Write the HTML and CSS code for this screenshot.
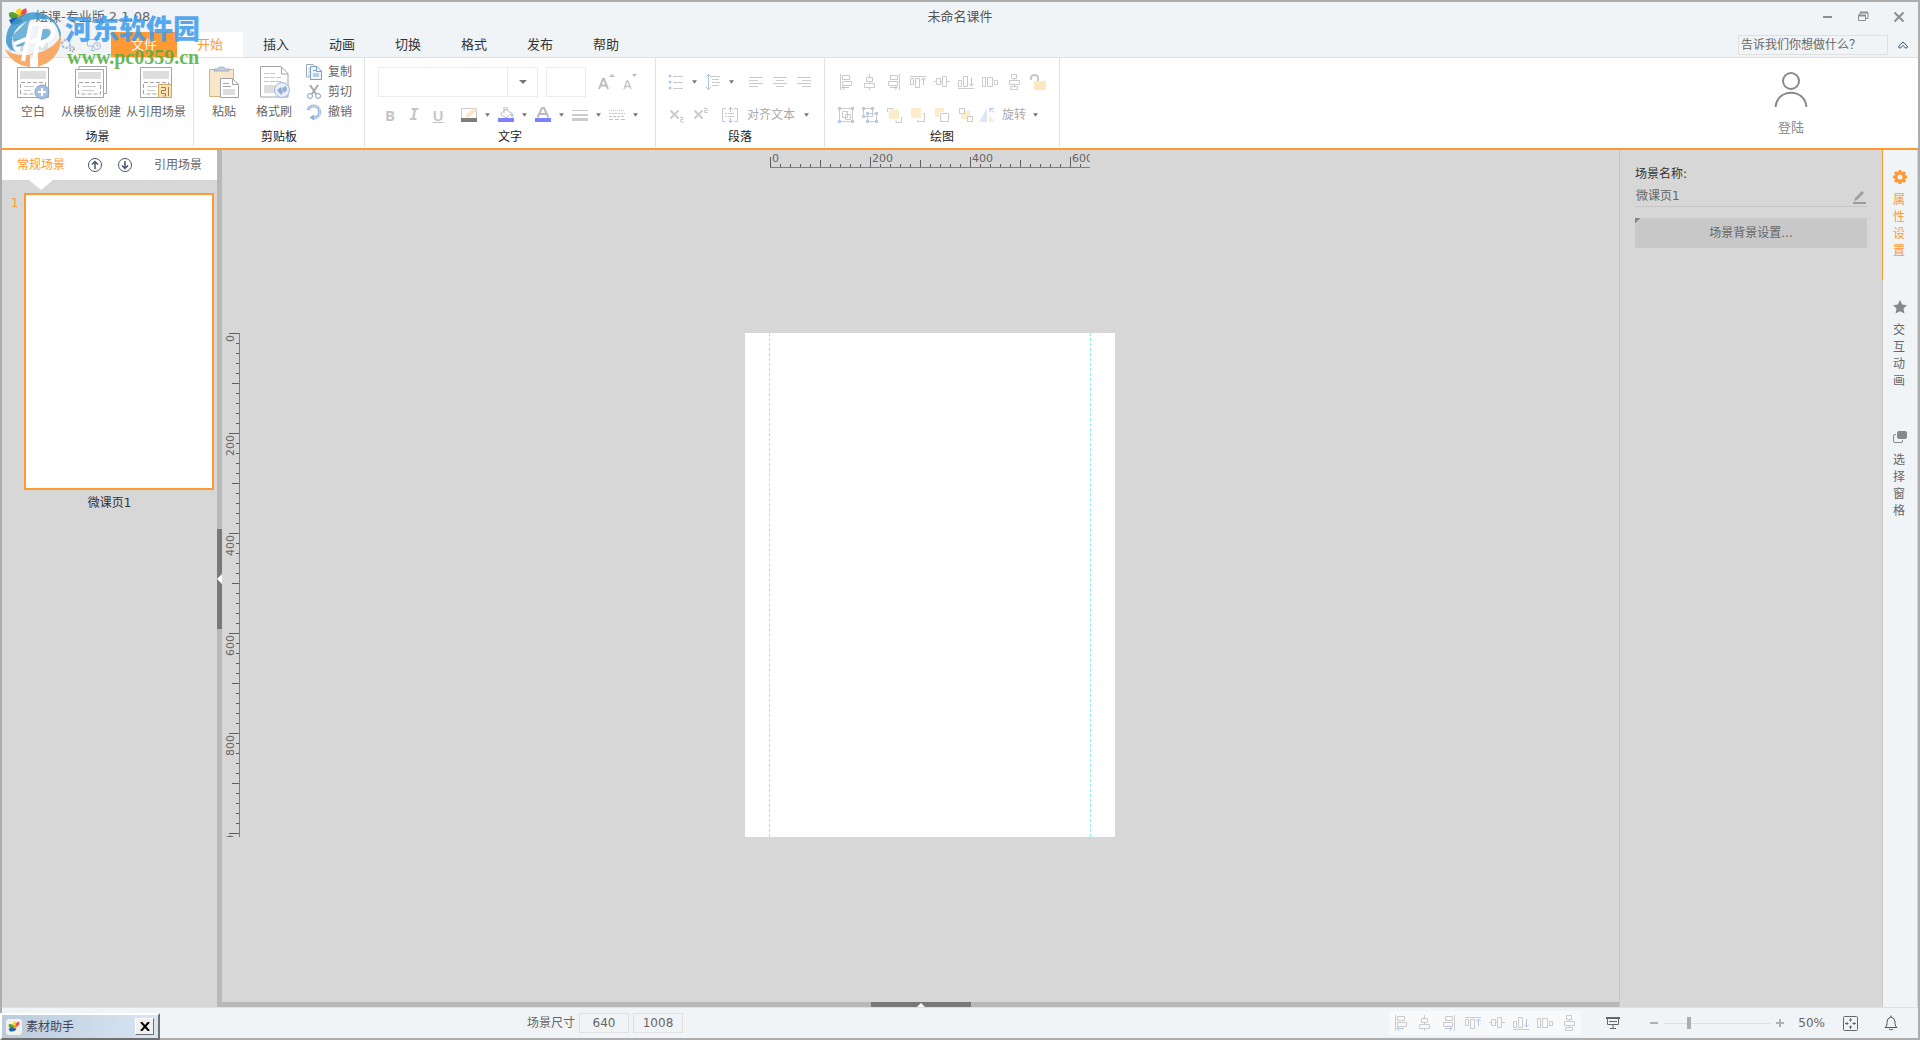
FILE: index.html
```html
<!DOCTYPE html>
<html lang="zh-CN">
<head>
<meta charset="utf-8">
<meta name="viewport" content="width=device-width, initial-scale=1">
<title>未命名课件 - 炫课-专业版 2.1.08</title>
<link rel="stylesheet" href="styles.css">
</head>
<body>
<svg class="sprite" aria-hidden="true">
  <defs>
    <symbol id="logo" viewBox="0 0 20 20">
      <path d="M8 3 L12 1 L14 4 L12 9 L9 8 Z" fill="#f8d21c"/>
      <path d="M14 3 L18 1 L19 5 L15 10 L12 9 Z" fill="#ee4b4b"/>
      <path d="M1 6 Q5 3 10 8 L11 11 L4 12 Q0 10 1 6 Z" fill="#5aa32c"/>
      <path d="M1 13 Q7 9 13 11 L14 14 Q10 19 3 17 Z" fill="#1d62b5"/>
      <path d="M10 8 L15 7 L13 13 L9 12 Z" fill="#f39a2b"/>
    </symbol>
    <symbol id="al-left" viewBox="0 0 16 16"><path class="g" d="M2.500 0v16M4.500 1.500h7v4h-7zM4.500 7.500h9v4h-9z"/><path class="b" d="M4 13.500h7M6.500 11l-2.500 2.500 2.500 2.500"/></symbol>
    <symbol id="al-center" viewBox="0 0 16 16"><path class="g" d="M7.500 0v3M7.500 7v3M7.500 14v2M4.500 3.500h6v4h-6zM2.500 9.500h10v4h-10z"/></symbol>
    <symbol id="al-right" viewBox="0 0 16 16"><path class="g" d="M13.500 0v16M4.500 1.500h7v4h-7zM2.500 7.500h9v4h-9z"/><path class="b" d="M4 13.500h7M8.500 11l2.500 2.500-2.500 2.500"/></symbol>
    <symbol id="al-top" viewBox="0 0 16 16"><path class="g" d="M0 2.500h16M.5 4.500h3v6h-3zM5.500 4.500h4v9h-4z"/><path class="b" d="M13.500 11V4M11 6.500L13.500 4 16 6.500"/></symbol>
    <symbol id="al-middle" viewBox="0 0 16 16"><path class="g" d="M0 7.500h2M6 7.500h2M13 7.500h3M2.500 4.500h4v6h-4zM8.500 2.500h4v10h-4z"/></symbol>
    <symbol id="al-bottom" viewBox="0 0 16 16"><path class="g" d="M0 14.500h16M.5 6.500h3v6h-3zM5.500 2.500h4v10h-4z"/><path class="b" d="M13.500 4v8M11 9.500l2.500 2.500 2.500-2.500"/></symbol>
    <symbol id="ds-h" viewBox="0 0 16 16"><path class="g" d="M.5 3.500h3v9h-3zM5.500 3.500h5v9h-5zM12.500 6.500h3v4h-3z"/></symbol>
    <symbol id="ds-v" viewBox="0 0 16 16"><path class="g" d="M8.500 4v3M8.500 10v2M5.500.5h5v4h-5zM3.500 6.500h10v4h-10zM4.500 12.500h7v3h-7z"/></symbol>
    <symbol id="caret" viewBox="0 0 6 4"><path d="M0 0h6L3 4z" fill="#777"/></symbol>
  </defs>
</svg>

<div class="window">
  <header class="titlebar">
    <div class="title-row">
      <div class="app-name"><svg width="20" height="20"><use href="#logo"/></svg><span>炫课-专业版 2.1.08</span></div>
      <h1 class="doc-name">未命名课件</h1>
      <div class="win-controls">
        <button type="button" aria-label="最小化"><svg width="12" height="12"><path d="M2 6h9" stroke="#8e8e8e" stroke-width="2"/></svg></button>
        <button type="button" aria-label="还原"><svg width="12" height="12"><path d="M3 4V1.500h8v6H8M1.500 4.500h7v5h-7z" fill="none" stroke="#8e8e8e" stroke-width="1"/><path d="M3 1.500h8M1 4.500h8" stroke="#8e8e8e" stroke-width="2"/></svg></button>
        <button type="button" aria-label="关闭"><svg width="12" height="12"><path d="M1.500 1.500l9 9M10.500 1.500l-9 9" stroke="#8e8e8e" stroke-width="2"/></svg></button>
      </div>
    </div>
    <div class="tab-row">
      <div class="quick">
        <button type="button" aria-label="保存"><svg width="16" height="16"><path d="M1.500 2.500h11l2 2v9h-13z" fill="#dbe3ee" stroke="#bccada"/><path d="M4 9h8v5H4z" fill="#fff"/></svg></button>
        <button type="button" aria-label="新建"><svg width="16" height="16"><path d="M3 1h7l4 4v8H3z" fill="#dbe3ee"/><path d="M8 5v6M5 8h6" stroke="#fff" stroke-width="2"/></svg></button>
        <button type="button" aria-label="设置"><svg width="16" height="16"><circle cx="6" cy="7" r="4" fill="none" stroke="#a9bdd6" stroke-width="2" stroke-dasharray="3 1"/><circle cx="12" cy="12" r="2" fill="none" stroke="#9a9a9a" stroke-width="2" stroke-dasharray="1 1"/></svg></button>
        <button type="button" aria-label="预览"><svg width="16" height="16"><path d="M0 2.500h14M1.500 3v6h6M5 13.500h4M6 9v4" fill="none" stroke="#a9bdd6"/><circle cx="11" cy="9" r="3.500" fill="#f1f4f7" stroke="#a9bdd6"/><path d="M11 7v2h2" fill="none" stroke="#a9bdd6"/></svg></button>
      </div>
      <nav class="tabs">
        <button type="button" class="file">文件</button>
        <button type="button" class="active">开始</button>
        <button type="button">插入</button>
        <button type="button">动画</button>
        <button type="button">切换</button>
        <button type="button">格式</button>
        <button type="button">发布</button>
        <button type="button">帮助</button>
      </nav>
      <input class="search" type="text" aria-label="搜索" placeholder="告诉我们你想做什么？">
      <button type="button" class="collapse" aria-label="折叠功能区"><svg width="10" height="8"><path d="M1 7L.800 5 5 1l4.200 4L9 7H7.500L5 4.500 2.500 7z" fill="none" stroke="#3f5871"/></svg></button>
    </div>
  </header>

  <div class="ribbon">
    <section class="group scenes">
      <div class="tools">
        <button type="button" class="big">
          <svg width="34" height="34"><g fill="none" stroke="#a3a3a3"><path d="M1.500 1.500h31v30h-31z" fill="#fff"/><path d="M4.500 28V16.500h25V28z" stroke-dasharray="4 2"/><path d="M8 20.500h10M8 24.500h7" stroke="#c9c9c9"/></g><path d="M4 5h26v8H4z" fill="#dedede"/><circle cx="26" cy="26" r="7" fill="#a5bfe0" stroke="#86a3c9"/><path d="M26 22v8M22 26h8" stroke="#fff" stroke-width="2"/></svg>
          <span>空白</span></button>
        <button type="button" class="big">
          <svg width="34" height="34"><g fill="none" stroke="#a3a3a3"><path d="M5 3V.500h27.500v27H29"/><path d="M1.500 3.500h28v28h-28z" fill="#fff"/><path d="M4.500 28V16.500h22V28z" stroke-dasharray="4 2"/><path d="M8 20.500h14M8 24.500h12" stroke="#c9c9c9"/></g><path d="M4 6h23v7H4z" fill="#dedede"/></svg>
          <span>从模板创建</span></button>
        <button type="button" class="big">
          <svg width="34" height="34"><g fill="none" stroke="#a3a3a3"><path d="M1.500 1.500h31v30h-31z" fill="#fff"/><path d="M4.500 28V16.500h25V28z" stroke-dasharray="4 2"/><path d="M8 20.500h10M8 24.500h8" stroke="#c9c9c9"/></g><path d="M4 5h26v8H4z" fill="#dedede"/><path d="M19.500 18.500h13v13h-13z" fill="#fbe3b4" stroke="#c9a765"/><path d="M22 21.500h4.500v3h-4v3h4v2.500h-2M29.500 21v9" fill="none" stroke="#9c8352"/></svg>
          <span>从引用场景</span></button>
      </div>
      <h2>场景</h2>
    </section>

    <section class="group clipboard">
      <div class="tools">
        <button type="button" class="big">
          <svg width="34" height="34"><path d="M2.500 3.500h24v27h-24z" fill="#f8e6c8" stroke="#d3b684"/><path d="M7 5V3h4q0-2 3.500-2T18 3h4v2z" fill="#c6d2e0" stroke="#9fb0c4"/><path d="M13.500 12.500H25l6.500 6v13h-18z" fill="#fff" stroke="#a3a3a3"/><path d="M25.500 13v5.500H31M16 17.500h6M16 20.500h8" fill="none" stroke="#a3a3a3"/><path d="M16 23h12v6H16z" fill="#dcdcdc"/></svg>
          <span>粘贴</span></button>
        <button type="button" class="big">
          <svg width="34" height="34"><path d="M3.500.500H24l7 7v23.500h-27.500z" fill="#fff" stroke="#a3a3a3"/><path d="M24.500 1v7H31" fill="none" stroke="#a3a3a3"/><path d="M7 7.500h12M7 11.500h18M7 15.500h18" stroke="#c5c5c5" stroke-dasharray="5 1"/><path d="M7 19h13v8H7z" fill="#dedede"/><circle cx="25" cy="24" r="7.500" fill="#e9eff9" stroke="#9fb9db"/><path d="M20 24l4-3 2 5-2 3zM25 22l4-2 1 4-3 3z" fill="#8fadd6"/></svg>
          <span>格式刷</span></button>
        <div class="stack">
          <button type="button"><svg width="16" height="16"><path d="M.5 13V.500H7l2 2V13z" fill="#fff" stroke="#9aa9bc"/><path d="M2 5h3M2 8h3M2 11h3" stroke="#9fb9db"/><path d="M4.500 2.500H11l4.500 4.500v8.500h-11z" fill="#f1f6fd" stroke="#7f9fc8"/><path d="M10.500 3v4.500H15M7 6.500h3M7 12h6" fill="none" stroke="#7f9fc8"/><path d="M7 9h6v4H7z" fill="#b9cde8"/></svg>复制</button>
          <button type="button"><svg width="16" height="16"><path d="M4 1l6 9M12 1l-6 9" stroke="#aaa" stroke-width="2"/><g fill="#fff" stroke="#7f9fc8"><circle cx="4" cy="12" r="2.500"/><circle cx="12" cy="12" r="2.500"/></g></svg>剪切</button>
          <button type="button"><svg width="16" height="16"><path d="M2 6a6 6 0 1 1 6 8" fill="none" stroke="#8fb0db" stroke-width="3"/><path d="M2.500 5.500a6 6 0 1 1 5.500 8.500" fill="none" stroke="#e1ecfa"/><path d="M8 10.500v6L3.500 13.500z" fill="#8fb0db"/></svg>撤销</button>
        </div>
      </div>
      <h2>剪贴板</h2>
    </section>

    <section class="group text">
      <div class="tools rows">
        <div class="row fields">
          <div class="font-box"><input type="text" aria-label="字体" disabled><button type="button" aria-label="选择字体" disabled><svg width="8" height="4"><path d="M0 0h8L4 4z" fill="#777"/></svg></button></div>
          <input class="size" type="text" aria-label="字号" disabled>
          <button type="button" class="ic" aria-label="增大字号" disabled><svg width="18" height="16"><path d="M2 15L6 5h1l4 10M3.500 11.500h6" fill="none" stroke="#bdbdbd" stroke-width="2"/><path d="M12 3l3-3 3 3z" fill="#bdbdbd"/></svg></button>
          <button type="button" class="ic" aria-label="减小字号" disabled><svg width="18" height="16"><path d="M3 15L6 7h1l3 8M4 12.500h5" fill="none" stroke="#c5c5c5" stroke-width="1.500"/><path d="M11 0h5l-2.500 3z" fill="#bdbdbd"/></svg></button>
        </div>
        <div class="row">
          <button type="button" class="ic bold" disabled>B</button>
          <button type="button" class="ic italic" disabled>I</button>
          <button type="button" class="ic under" disabled>U</button>
          <span class="gap-l"></span>
          <button type="button" class="combo" aria-label="边框颜色" disabled><svg width="16" height="16"><path d="M.5 11V1.500h15V11" fill="none" stroke="#c9c9c9"/><path d="M4 11l1.500-4L13 1l3 2.500L8 10z" fill="#fbe6c8"/><path d="M0 11h16v4H0z" fill="#7d7d7d"/></svg><svg width="5" height="4"><use href="#caret"/></svg></button>
          <button type="button" class="combo" aria-label="填充颜色" disabled><svg width="16" height="16"><path d="M2.500 7L8 2l5.500 4.500L8 11zM6 6V0h3v4" fill="none" stroke="#bbb"/><path d="M13 5q4 2 2 6l-2-1z" fill="#b9d5f0"/><path d="M0 11h16v4H0z" fill="#8080ff"/></svg><svg width="5" height="4"><use href="#caret"/></svg></button>
          <button type="button" class="combo" aria-label="字体颜色" disabled><svg width="16" height="16"><path d="M2.500 10.500L7.500 0h1l5 10.500M4.500 7h7" fill="none" stroke="#bbb" stroke-width="2"/><path d="M0 11h16v4H0z" fill="#8080ff"/></svg><svg width="5" height="4"><use href="#caret"/></svg></button>
          <button type="button" class="combo" aria-label="线宽" disabled><svg width="16" height="16"><path d="M0 3.500h16" stroke="#ccc"/><path d="M0 8h16" stroke="#ccc" stroke-width="2"/><path d="M0 12.500h16" stroke="#ccc" stroke-width="3"/></svg><svg width="5" height="4"><use href="#caret"/></svg></button>
          <button type="button" class="combo" aria-label="线型" disabled><svg width="16" height="16"><g stroke="#c4c4c4"><path d="M0 3.500h16" stroke-dasharray="1 1"/><path d="M0 6.500h16" stroke-dasharray="2 1"/><path d="M0 9.500h16" stroke-dasharray="3 1"/><path d="M0 12.500h16" stroke-dasharray="4 2"/></g></svg><svg width="5" height="4"><use href="#caret"/></svg></button>
        </div>
      </div>
      <h2>文字</h2>
    </section>

    <section class="group para">
      <div class="tools rows">
        <div class="row fields">
          <button type="button" class="combo" aria-label="项目符号" disabled><svg width="16" height="16"><g fill="#b0c8e8"><circle cx="2" cy="2" r="1.500"/><circle cx="2" cy="8" r="1.500"/><circle cx="2" cy="14" r="1.500"/></g><path class="g" d="M5 2.500h10M5 8.500h10M5 14.500h10"/></svg><svg width="5" height="4"><use href="#caret"/></svg></button>
          <button type="button" class="combo" aria-label="行距" disabled><svg width="16" height="16"><path class="b" d="M3.500 0v16M1 3l2.500-2.500L6 3M1 13l2.500 2.500L6 13"/><path class="g" d="M6 2.500h9M7 5.500h7M7 8.500h8M7 11.500h7"/></svg><svg width="5" height="4"><use href="#caret"/></svg></button>
          <span class="gap-s"></span>
          <button type="button" class="ic" aria-label="左对齐" disabled><svg width="16" height="12"><path class="g" d="M1 1.500h14M1 4.500h9M1 7.500h14M1 10.500h9"/></svg></button>
          <button type="button" class="ic" aria-label="居中" disabled><svg width="16" height="12"><path class="g" d="M1 1.500h14M4 4.500h8M1 7.500h14M4 10.500h8"/></svg></button>
          <button type="button" class="ic" aria-label="右对齐" disabled><svg width="16" height="12"><path class="g" d="M1 1.500h14M6 4.500h9M1 7.500h14M6 10.500h9"/></svg></button>
        </div>
        <div class="row">
          <button type="button" class="ic" aria-label="下标" disabled><svg width="16" height="16"><path d="M1.500 3.500l8 8M9.500 3.500l-8 8" stroke="#ccc" stroke-width="2"/><path class="g" d="M11 10.500h3v2h-2.500v2.500H15"/></svg></button>
          <button type="button" class="ic" aria-label="上标" disabled><svg width="16" height="16"><path d="M1.500 3.500l8 8M9.500 3.500l-8 8" stroke="#ccc" stroke-width="2"/><path class="g" d="M11 1.500h3v2h-2.500v2H15"/></svg></button>
          <span class="gap-s"></span>
          <button type="button" class="wide" disabled><svg width="16" height="16"><path class="g" d="M4 1.500H.500v13H4M12 1.500h3.500v13H12M3 6.500h2M6 6.500h6M3 9.500h2M6 9.500h6"/><path class="b" d="M8.500 0v5M6.500 2.500l2-2 2 2M8.500 11v5M6.500 13.500l2 2 2-2"/></svg><span>对齐文本</span><svg width="5" height="4"><use href="#caret"/></svg></button>
        </div>
      </div>
      <h2>段落</h2>
    </section>

    <section class="group draw">
      <div class="tools rows">
        <div class="row fields">
          <button type="button" class="ic" aria-label="左对齐" disabled><svg width="16" height="16"><use href="#al-left"/></svg></button>
          <button type="button" class="ic" aria-label="水平居中" disabled><svg width="16" height="16"><use href="#al-center"/></svg></button>
          <button type="button" class="ic" aria-label="右对齐" disabled><svg width="16" height="16"><use href="#al-right"/></svg></button>
          <button type="button" class="ic" aria-label="顶端对齐" disabled><svg width="16" height="16"><use href="#al-top"/></svg></button>
          <button type="button" class="ic" aria-label="垂直居中" disabled><svg width="16" height="16"><use href="#al-middle"/></svg></button>
          <button type="button" class="ic" aria-label="底端对齐" disabled><svg width="16" height="16"><use href="#al-bottom"/></svg></button>
          <button type="button" class="ic" aria-label="横向分布" disabled><svg width="16" height="16"><use href="#ds-h"/></svg></button>
          <button type="button" class="ic" aria-label="纵向分布" disabled><svg width="16" height="16"><use href="#ds-v"/></svg></button>
          <button type="button" class="ic" aria-label="解锁" disabled><svg width="16" height="16"><path d="M1 6V4q0-3 3.500-3T8 4v3" fill="none" stroke="#c9c9c9" stroke-width="2"/><path d="M4 7h12v9H4z" fill="#fde8c0"/></svg></button>
        </div>
        <div class="row">
          <button type="button" class="ic" aria-label="组合" disabled><svg width="16" height="16"><path class="g" d="M2 1.500h12M2 14.500h12M1.500 2v12M14.500 2v12M4.500 4.500h5v6h-5zM7.500 7.500h5v5h-5z"/><path class="bf" d="M0 0h3v3H0zM13 0h3v3h-3zM0 13h3v3H0zM13 13h3v3h-3z"/></svg></button>
          <button type="button" class="ic" aria-label="取消组合" disabled><svg width="16" height="16"><path class="g" d="M1.500 1.500h9v8h-9zM5.500 6.500h9v8h-9z"/><path class="bf" d="M0 0h3v3H0zM9 0h3v3H9zM0 8h3v3H0zM4 5h3v3H4zM13 5h3v3h-3zM4 13h3v3H4zM13 13h3v3h-3z"/></svg></button>
          <button type="button" class="ic" aria-label="置于顶层" disabled><svg width="16" height="16"><path class="y" d="M3 3h10v9H3z"/><path class="g" d="M1.500 5V1.500H7V3M15.500 10v5.500H10V13"/></svg></button>
          <button type="button" class="ic" aria-label="上移一层" disabled><svg width="16" height="16"><path class="y" d="M1 1h10v10H1z"/><path class="g" d="M13 6.500h1.500v8H7.500V13"/></svg></button>
          <button type="button" class="ic" aria-label="下移一层" disabled><svg width="16" height="16"><path class="y" d="M1 1h9v4H5v5H1z"/><path class="g" d="M6.500 6.500h8v8h-8z"/></svg></button>
          <button type="button" class="ic" aria-label="置于底层" disabled><svg width="16" height="16"><path class="y" d="M3 4h9v8H3z"/><path d="M1 1h6v6H1zM9 9h6v6H9z" fill="#fff"/><path class="g" d="M1.500 1.500h5v5h-5zM9.500 9.500h5v5h-5z"/></svg></button>
          <button type="button" class="wide" disabled><svg width="16" height="16"><path d="M0 15L8 1v14z" fill="#dce9f5"/><path class="y" d="M10 8l6 7h-6z"/><path class="b" d="M11 5V1.500h4M11 1.500l4 4"/></svg><span>旋转</span><svg width="5" height="4"><use href="#caret"/></svg></button>
        </div>
      </div>
      <h2>绘图</h2>
    </section>

    <button type="button" class="login">
      <svg width="34" height="36"><g fill="none" stroke="#8a8a8a" stroke-width="2"><circle cx="17" cy="9" r="8"/><path d="M1.500 35C3 16 31 16 32.500 35"/></g></svg>
      <span>登陆</span>
    </button>
  </div>

  <main class="body">
    <aside class="scene-panel">
      <div class="scene-head">
        <button type="button" class="on">常规场景</button>
        <button type="button" class="round" aria-label="上移"><svg width="14" height="14"><g fill="none" stroke="#46566b"><circle cx="7" cy="7" r="6.500"/><path d="M7 11V3.500M4 6.500l3-3 3 3" stroke-width="1.500"/></g></svg></button>
        <button type="button" class="round" aria-label="下移"><svg width="14" height="14"><g fill="none" stroke="#46566b"><circle cx="7" cy="7" r="6.500"/><path d="M7 3v7.500M4 7.500l3 3 3-3" stroke-width="1.500"/></g></svg></button>
        <button type="button" class="ref">引用场景</button>
      </div>
      <ol class="scene-list">
        <li><span class="num">1</span><div class="thumb"></div></li>
      </ol>
      <p class="scene-name">微课页1</p>
    </aside>
    <div class="split-v"><button type="button" aria-label="收起场景栏"><svg width="5" height="10"><path d="M5 0v10L0 5z" fill="#fff"/></svg></button></div>

    <div class="center">
      <div class="stage">
        <svg class="ruler-h" width="320" height="18">
          <defs>
            <pattern id="h10" width="10" height="18" patternUnits="userSpaceOnUse"><path d="M0 14h1v4H0z" fill="#5b5f63"/></pattern>
            <pattern id="h50" width="50" height="18" patternUnits="userSpaceOnUse"><path d="M0 10h1v8H0z" fill="#5b5f63"/></pattern>
            <pattern id="h100" width="100" height="18" patternUnits="userSpaceOnUse"><path d="M0 7h1v11H0z" fill="#5b5f63"/></pattern>
          </defs>
          <path d="M0 0h320v18H0z" fill="url(#h10)"/><path d="M0 0h320v18H0z" fill="url(#h50)"/><path d="M0 0h320v18H0z" fill="url(#h100)"/>
          <path d="M0 17h320v1H0z" fill="#7c8085"/>
          <g class="marks"><text x="2" y="12">0</text><text x="102" y="12">200</text><text x="202" y="12">400</text><text x="302" y="12">600</text></g>
        </svg>
        <svg class="ruler-v" width="18" height="504">
          <defs>
            <pattern id="v10" width="18" height="10" patternUnits="userSpaceOnUse"><path d="M14 0h4v1h-4z" fill="#5b5f63"/></pattern>
            <pattern id="v50" width="18" height="50" patternUnits="userSpaceOnUse"><path d="M10 0h8v1h-8z" fill="#5b5f63"/></pattern>
            <pattern id="v100" width="18" height="100" patternUnits="userSpaceOnUse"><path d="M7 0h11v1H7z" fill="#5b5f63"/></pattern>
          </defs>
          <path d="M0 0h18v504H0z" fill="url(#v10)"/><path d="M0 0h18v504H0z" fill="url(#v50)"/><path d="M0 0h18v504H0z" fill="url(#v100)"/>
          <path d="M17 0h1v504h-1z" fill="#7c8085"/>
          <g class="marks" text-anchor="end"><text transform="translate(12 2) rotate(-90)">0</text><text transform="translate(12 102) rotate(-90)">200</text><text transform="translate(12 202) rotate(-90)">400</text><text transform="translate(12 302) rotate(-90)">600</text><text transform="translate(12 402) rotate(-90)">800</text><text transform="translate(12 502) rotate(-90)">1000</text></g>
        </svg>
        <div class="page"><div class="guides"></div></div>
      </div>
      <div class="split-h"><button type="button" aria-label="展开时间轴"><svg width="8" height="4"><path d="M0 4h8L4 0z" fill="#fff"/></svg></button></div>
    </div>

    <aside class="props">
      <label for="scene-name">场景名称:</label>
      <div class="name-field"><input id="scene-name" type="text" value="微课页1"><svg width="13" height="13"><path d="M0 12h13" stroke="#9a9a9a" stroke-width="2"/><path d="M1 10l1-3 7-7 2 2-7 7z" fill="#a0a0a0"/></svg></div>
      <button type="button" class="bg-set">场景背景设置...</button>
    </aside>

    <nav class="side-tabs">
      <button type="button" class="on"><svg width="14" height="14"><circle cx="7" cy="7" r="4" fill="none" stroke="#ff9933" stroke-width="3"/><path d="M7 0v2M7 12v2M0 7h2M12 7h2M2 2l1.500 1.500M10.500 10.500L12 12M2 12l1.500-1.500M10.500 3.500L12 2" stroke="#ff9933" stroke-width="3"/></svg><span>属性设置</span></button>
      <button type="button"><svg width="14" height="14"><path d="M7 0l2.200 4.600 4.800.600-3.500 3.400.9 5L7 11.200 2.600 13.600l.9-5L0 5.200l4.800-.6z" fill="#888"/></svg><span>交互动画</span></button>
      <button type="button"><svg width="14" height="14"><rect x="4" y="1" width="10" height="8" rx="2" fill="#888"/><path d="M3 4.500H2q-1.500 0-1.500 1.500v5q0 1.500 1.500 1.500h6q1.500 0 1.500-1.500v-1" fill="none" stroke="#888"/></svg><span>选择窗格</span></button>
    </nav>
  </main>

  <footer class="status">
    <div class="dims">
      <span>场景尺寸</span>
      <input type="text" aria-label="宽度" value="640">
      <input type="text" aria-label="高度" value="1008">
    </div>
    <div class="aligns">
      <button type="button" class="ic" aria-label="左对齐" disabled><svg width="16" height="16"><use href="#al-left"/></svg></button>
      <button type="button" class="ic" aria-label="水平居中" disabled><svg width="16" height="16"><use href="#al-center"/></svg></button>
      <button type="button" class="ic" aria-label="右对齐" disabled><svg width="16" height="16"><use href="#al-right"/></svg></button>
      <button type="button" class="ic" aria-label="顶端对齐" disabled><svg width="16" height="16"><use href="#al-top"/></svg></button>
      <button type="button" class="ic" aria-label="垂直居中" disabled><svg width="16" height="16"><use href="#al-middle"/></svg></button>
      <button type="button" class="ic" aria-label="底端对齐" disabled><svg width="16" height="16"><use href="#al-bottom"/></svg></button>
      <button type="button" class="ic" aria-label="横向分布" disabled><svg width="16" height="16"><use href="#ds-h"/></svg></button>
      <button type="button" class="ic" aria-label="纵向分布" disabled><svg width="16" height="16"><use href="#ds-v"/></svg></button>
    </div>
    <button type="button" class="st" aria-label="放映"><svg width="14" height="14"><path d="M0 2h14" stroke="#666" stroke-width="2"/><path d="M1.500 3v5.500h11V3M3 5.500h8M7 9v4M4 12.500h6" fill="none" stroke="#666"/></svg></button>
    <div class="zoom">
      <button type="button" aria-label="缩小"><svg width="8" height="8"><path d="M0 4h8" stroke="#b0b0b0" stroke-width="2"/></svg></button>
      <input type="range" aria-label="缩放" min="0" max="100" value="22">
      <button type="button" aria-label="放大"><svg width="8" height="8"><path d="M0 4h8M4 0v8" stroke="#b0b0b0" stroke-width="2"/></svg></button>
      <output>50%</output>
    </div>
    <button type="button" class="st" aria-label="适应窗口"><svg width="15" height="15"><rect x=".5" y=".5" width="14" height="14" rx="1" fill="none" stroke="#666"/><path d="M7.500 2v3.500M6 4h3M7.500 13V9.500M6 11h3M2 7.500h3.500M4 6v3M13 7.500H9.500M11 6v3" stroke="#666"/></svg></button>
    <button type="button" class="st" aria-label="通知"><svg width="14" height="16"><path d="M1 12.500q2-1 2-4V7q0-4 4-5 4 1 4 5v1.500q0 3 2 4zM7 .500V2M5 14q2 2 4 0" fill="none" stroke="#555"/></svg></button>
  </footer>
</div>

<div class="helper">
  <svg width="16" height="16"><rect width="16" height="16" rx="3" fill="#f3f1ec"/><use href="#logo" x="2" y="2" width="12" height="12"/></svg>
  <span>素材助手</span>
  <button type="button" aria-label="关闭素材助手"><svg width="10" height="9"><path d="M1 0l8 9M9 0L1 9" stroke="#000" stroke-width="2"/></svg></button>
</div>

<div class="watermark">
  <svg width="60" height="60" viewBox="0 0 60 60">
    <path d="M2 33A28 28 0 0 1 56 21Q58 26 56 30 53 8 37 10 20 9 11 22 4 34 12 43 3 40 2 33z" fill="#3c97cb" opacity=".85"/>
    <path d="M9 26L22 13 26 10 22 36 13 38Q8 32 9 26zM38 20h6q4 1 2 6-2 4-9 5z" fill="#3c97cb" opacity=".7"/>
    <path d="M1 40Q14 50 34 44 52 38 57 26 58 44 43 54L34 58V44L26 45V58Q8 56 1 40z" fill="#f6a35a" opacity=".9"/>
    <path d="M10 35L22 30M27 14L19 52M22 32H34M38 14L30 52M28 15H42Q51 16 49 25 46 33 34 34" fill="none" stroke="#fff" stroke-width="4"/>
  </svg>
  <div><strong>河东软件园</strong><em>www.pc0359.cn</em></div>
</div>
</body>
</html>
```
FILE: styles.css
```css
* { box-sizing: border-box; }

html, body { height: 100%; }

body {
  margin: 0;
  font: 12px/16px "DejaVu Sans", "Noto Sans CJK SC", sans-serif;
  color: #666;
  background: #d7d7d7;
}

button, input {
  font: inherit;
  color: inherit;
  margin: 0;
  padding: 0;
  border: 0;
  background: none;
  border-radius: 0;
  outline: 0;
}

svg { display: block; flex: none; }
h1, h2, p, ol { margin: 0; padding: 0; font-weight: normal; list-style: none; }

.sprite { position: absolute; width: 0; height: 0; }
.g { fill: none; stroke: #cbcbcb; }
.b { fill: none; stroke: #adc6e6; }
.bf { fill: #b9cdea; }
.y { fill: #fdeccb; }

.window {
  display: flex;
  flex-direction: column;
  height: 100vh;
  border: 2px solid #adadad;
}

/* Title bar and tabs */
.titlebar { background: #f1f4f7; border-bottom: 1px solid #e0e0e0; }

.title-row {
  display: grid;
  grid-template-columns: 1fr auto 1fr;
  align-items: center;
  height: 30px;
}
.app-name { display: flex; align-items: center; gap: 7px; padding-left: 6px; font-size: 13px; }
.doc-name { font-size: 13px; color: #555; }
.win-controls { display: flex; justify-content: flex-end; padding-right: 1px; }
.win-controls button { width: 36px; height: 30px; display: grid; place-items: center; }

.tab-row { display: flex; align-items: center; height: 25px; }
.quick { display: flex; gap: 10px; width: 109px; padding-left: 6px; }
.tabs { display: flex; flex: 1; align-self: stretch; }
.tabs button { width: 66px; font-size: 13px; color: #333; }
.tabs .file { background: #ff9933; color: #fff; }
.tabs .active { background: #fff; color: #ff9933; }
.search { width: 150px; height: 20px; padding: 0 2px; border: 1px solid #e0e0e0; }
.search::placeholder { color: #666; opacity: 1; }
.collapse { width: 30px; display: grid; place-items: center; }

/* Ribbon */
.ribbon {
  display: flex;
  height: 92px;
  background: #fff;
  border-bottom: 2px solid #ff9933;
}
.group { display: flex; flex-direction: column; border-right: 1px solid #e2e2e2; margin-bottom: 1px; }
.group h2 { font-size: 12px; line-height: 20px; text-align: center; color: #222; }
.tools { display: flex; height: 69px; padding-top: 8px; }
.scenes { width: 192px; }
.clipboard { width: 171px; }
.text { width: 291px; }
.para { width: 169px; }
.draw { width: 235px; }

.big { display: flex; flex-direction: column; align-items: center; gap: 4px; height: 54px; }
.scenes .tools { gap: 5px; padding-left: 11px; }
.scenes .big:first-child { width: 40px; margin-right: 3px; }
.clipboard .tools { gap: 8px; padding-left: 9px; }
.clipboard .big { width: 42px; }
.stack { display: flex; flex-direction: column; margin-top: -4px; padding-left: 3px; }
.stack button { display: flex; align-items: center; gap: 6px; height: 20px; white-space: nowrap; }

.rows { flex-direction: column; gap: 6px; padding: 9px 0 0 9px; }
.text .rows { padding-left: 13px; }
.row { display: flex; align-items: center; height: 24px; }
.row.fields { height: 30px; }
.ic { width: 24px; height: 24px; display: grid; place-items: center; }
.combo { width: 37px; height: 24px; display: flex; align-items: center; padding-left: 3px; gap: 8px; }
.wide { height: 24px; display: flex; align-items: center; padding-left: 4px; gap: 9px; color: #aaa; }
.draw .wide { gap: 7px; padding-left: 1px; }
.gap-l { width: 8px; }
.gap-s { width: 5px; }
.font-box { display: flex; width: 160px; height: 30px; margin-right: 8px; border: 1px solid #ececec; }
.font-box input { flex: 1; min-width: 0; border-right: 1px solid #ececec; }
.font-box button { width: 29px; display: grid; place-items: center; }
.size { width: 40px; height: 30px; margin-right: 8px; border: 1px solid #ececec; }
.bold, .italic, .under { font: bold 15px/24px "Noto Sans", sans-serif; color: #c4c4c4; }
.italic { font-family: "DejaVu Sans Mono", monospace; font-style: italic; }
.under { text-decoration: underline; font-weight: 600; }

.login {
  display: flex;
  flex-direction: column;
  align-items: center;
  gap: 12px;
  margin-left: auto;
  margin-right: 110px;
  padding-top: 14px;
  height: 80px;
  font-size: 13px;
  color: #888;
}

/* Work area */
.body { display: flex; flex: 1; min-height: 0; background: #d7d7d7; }

.scene-panel { width: 215px; }
.scene-head { position: relative; display: flex; align-items: center; height: 30px; padding: 0 15px; background: #fff; }
.scene-head::after {
  content: "";
  position: absolute;
  left: 27px;
  top: 100%;
  border: 12px solid transparent;
  border-top: 10px solid #fff;
  border-bottom: 0;
}
.scene-head .on { color: #ff9933; margin-right: 23px; }
.round { margin-right: 16px; }
.scene-head .ref { margin-left: auto; }
.scene-list { padding-top: 13px; }
.scene-list li { display: flex; padding-right: 3px; }
.num { width: 22px; padding-left: 9px; line-height: 20px; color: #ff9933; }
.thumb { flex: 1; height: 297px; border: 2px solid #ff9933; background: #fff; }
.scene-name { padding-top: 5px; text-align: center; color: #333; }

.split-v { display: flex; align-items: center; width: 5px; background: #b8b8b8; }
.split-v button { width: 5px; height: 100px; background: #787878; display: grid; place-items: center; }
.split-h { display: flex; justify-content: center; height: 5px; background: #b8b8b8; }
.split-h button { width: 100px; height: 5px; background: #787878; display: grid; place-items: end center; }

.center { flex: 1; min-width: 0; display: flex; flex-direction: column; }
.stage {
  flex: 1;
  min-height: 0;
  display: grid;
  grid-template: 18px 1fr / 19px 1fr;
  padding-bottom: 1px;
}
.ruler-h { grid-area: 1 / 2; justify-self: center; }
.ruler-v { grid-area: 2 / 1; align-self: center; }
.marks { font-size: 11px; fill: #666; }
.page { grid-area: 2 / 2; place-self: center; width: 370px; height: 504px; padding: 0 24px; background: #fff; }
.guides { height: 100%; border: 1px dashed #8eeeee; border-width: 0 1px; }

.props { width: 263px; padding: 16px 15px 0; border-left: 1px solid #c8c8c8; }
.props label { display: block; color: #333; }
.name-field { display: flex; align-items: flex-end; gap: 4px; height: 25px; margin-bottom: 11px; padding: 0 1px 1px; border-bottom: 1px solid #c6c6c6; }
.name-field input { flex: 1; min-width: 0; height: 20px; margin-bottom: 1px; }
.name-field svg { margin-bottom: 1px; }
.bg-set {
  width: 100%;
  height: 30px;
  background: linear-gradient(135deg, #888 4px, #c8c8c8 4px);
}

.side-tabs { display: flex; flex-direction: column; width: 36px; background: #f1f4f7; border-right: 1px solid #d7d7d7; }
.side-tabs button {
  display: flex;
  flex-direction: column;
  align-items: center;
  gap: 8px;
  width: 35px;
  height: 130px;
  padding-top: 20px;
  border-left: 1px solid #c8c8c8;
}
.side-tabs::after { content: ""; flex: 1; border-left: 1px solid #c8c8c8; }
.side-tabs .on { border-color: #ff9933; color: #ff9933; }
.side-tabs span { width: 14px; line-height: 17px; text-align: left; word-break: break-all; }

/* Status bar */
.status {
  display: flex;
  align-items: center;
  height: 31px;
  padding-right: 20px;
  background: #f1f4f7;
  border-top: 1px solid #e0e0e0;
}
.dims { display: flex; align-items: center; gap: 4px; margin-left: 525px; margin-right: auto; }
.dims input { width: 50px; height: 20px; text-align: center; border: 1px solid #e0e0e0; }
.aligns { display: flex; margin-right: 24px; background: #f8f9fb; }
.zoom { display: flex; align-items: center; margin: 0 18px 0 30px; }
.zoom input { width: 106px; height: 12px; margin: 0 6px; appearance: none; }
.zoom input::-webkit-slider-runnable-track { height: 12px; background: linear-gradient(#dedede, #dedede) center / 100% 1px no-repeat; }
.zoom input::-webkit-slider-thumb { appearance: none; width: 4px; height: 12px; background: #adadad; }
.zoom output { margin-left: 14px; }
.st { width: 15px; display: grid; place-items: center; }
.st + .st { margin-left: 25px; }

/* Floating helper window */
.helper {
  position: absolute;
  left: 0;
  bottom: 0;
  display: flex;
  align-items: center;
  gap: 4px;
  width: 160px;
  height: 27px;
  padding: 0 4px;
  border: 2px solid #fff;
  border-right-color: #707070;
  border-bottom-color: #707070;
  background: linear-gradient(90deg, #bccbdc, #d8e5f3);
}
.helper span { flex: 1; color: #445; }
.helper button {
  width: 19px;
  height: 17px;
  display: grid;
  place-items: center;
  background: #f0f0f0;
  border: 1px solid #fff;
  border-right-color: #707070;
  border-bottom-color: #707070;
}

/* Site mark laid over the top-left corner */
.watermark {
  position: absolute;
  left: 4px;
  top: 9px;
  display: flex;
  gap: 1px;
  pointer-events: none;
}
.watermark strong { display: block; padding-top: 3px; font: 900 27px/32px "Noto Sans CJK SC", sans-serif; color: #3b9bed; opacity: .85; }
.watermark em { display: block; padding: 2px 0 0 2px; font: bold 20px/22px "Liberation Serif", serif; color: #4fae3c; opacity: .85; }
```
